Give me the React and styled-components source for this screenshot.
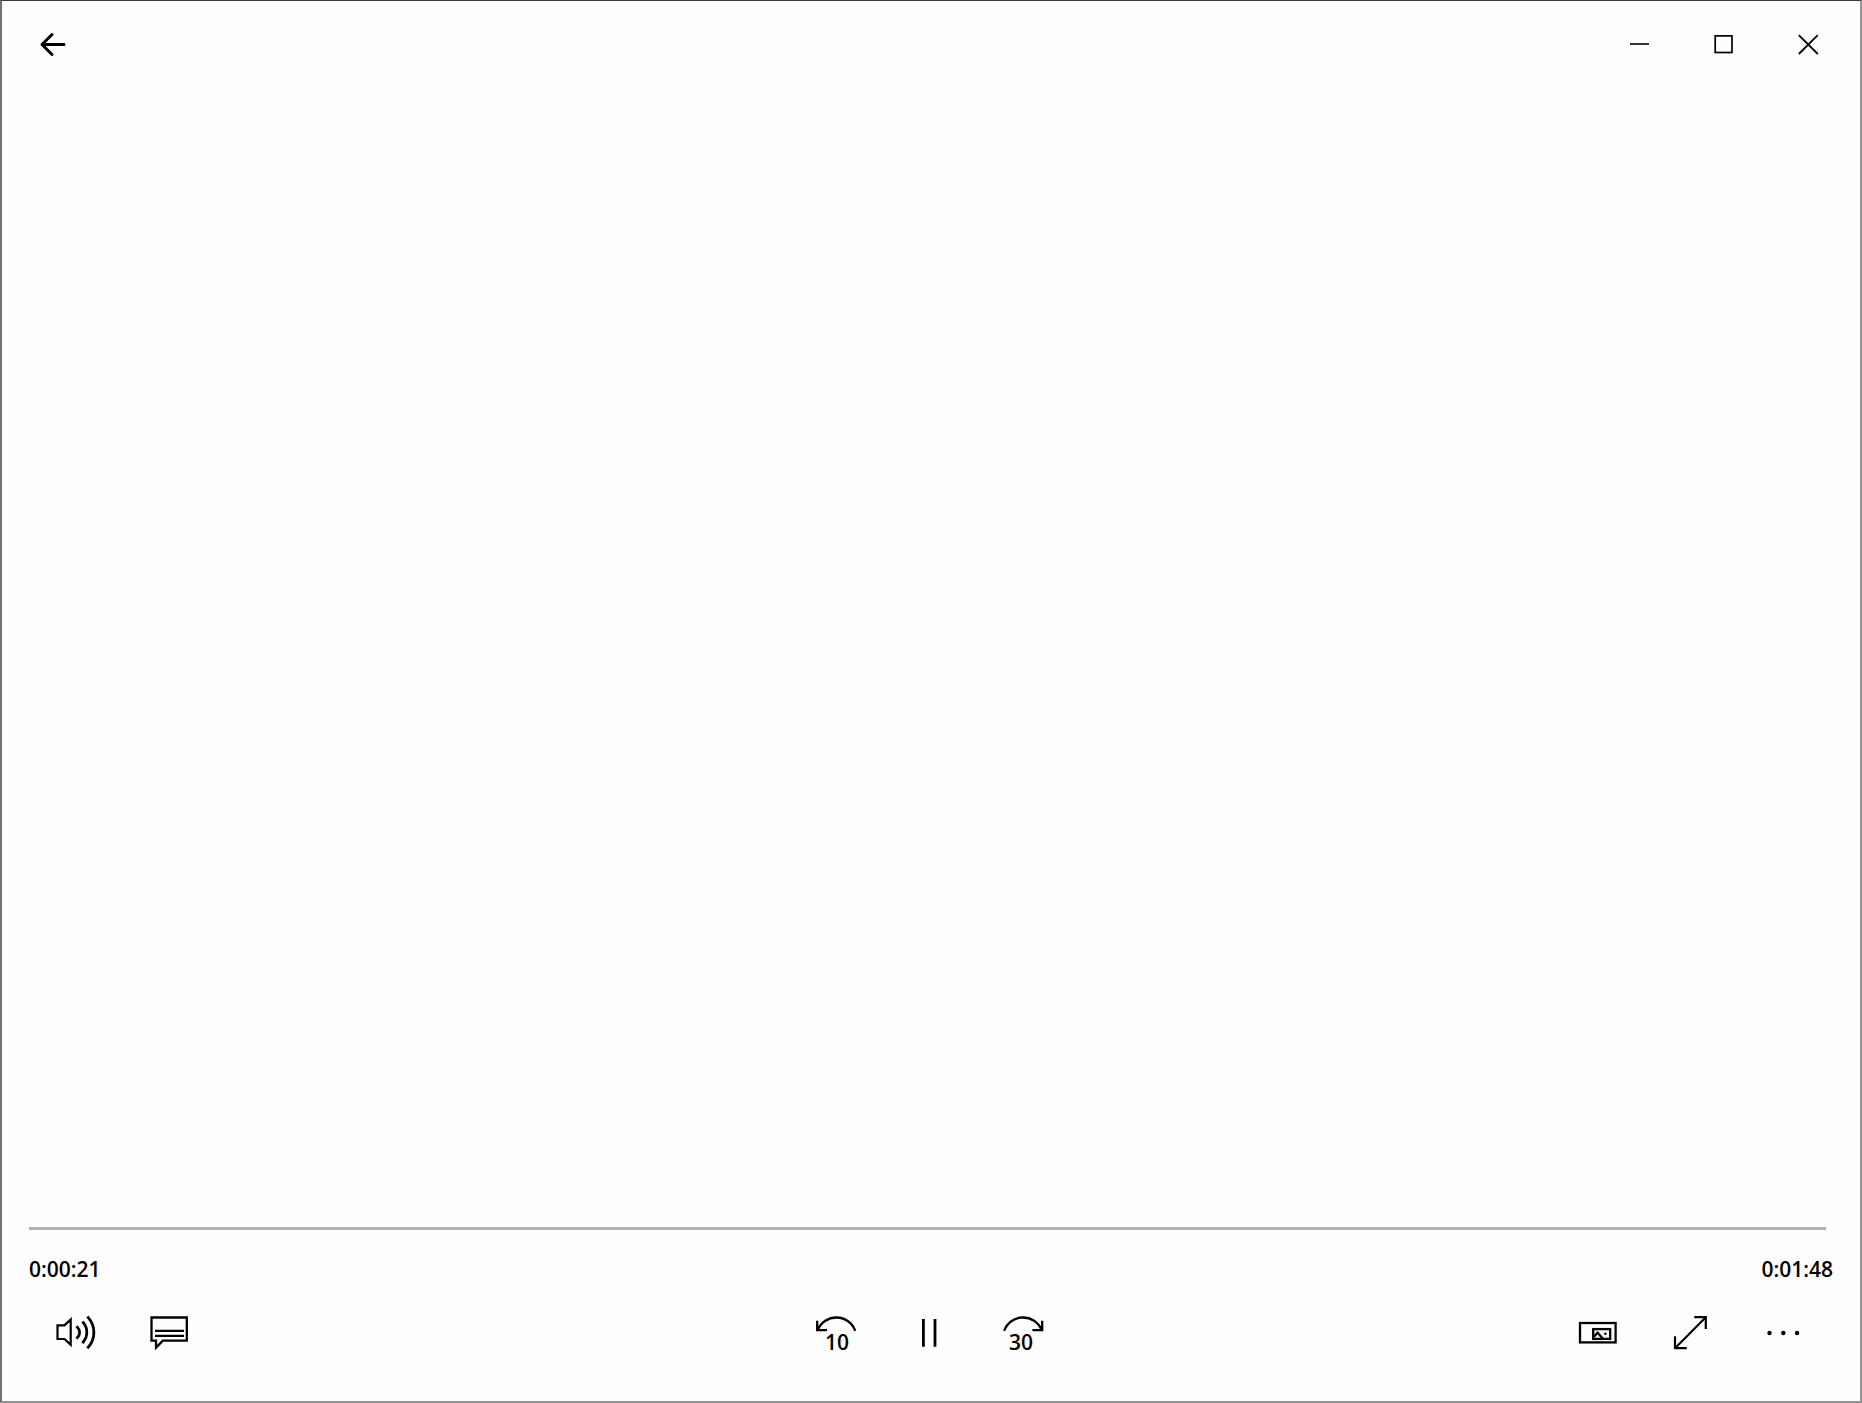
import React, { useState } from "react";
import styled, { createGlobalStyle } from "styled-components";

const GlobalStyle = createGlobalStyle`
    * {
        box-sizing: border-box;
    }

    body {
        margin: 0;
        background: #ffffff;
    }
`;

const Window = styled.div`
    min-height: 100vh;
    display: flex;
    flex-direction: column;
    background: #fefefe;
    color: #000000;
    border-style: solid;
    border-width: 1px 2px 2px;
    border-color: #3c3c3c #949494 #949494 #737373;
    font-family: "Open Sans", "Noto Sans", sans-serif;
`;

const TitleBar = styled.header`
    height: 87px;
    padding: 0 9px;
    display: flex;
    align-items: center;
    justify-content: space-between;
`;

const ButtonGroup = styled.div`
    display: flex;
    justify-content: ${(props) => props.$align || "flex-start"};
`;

const IconButton = styled.button`
    width: ${(props) => props.$width}px;
    height: 79px;
    padding: 0;
    display: flex;
    align-items: center;
    justify-content: center;
    background: transparent;
    border: none;
    color: inherit;
    font-family: inherit;
    cursor: pointer;
`;

const Icon = styled.svg`
    display: block;
    width: 49px;
    height: 49px;
    fill: none;
    stroke: currentColor;
    stroke-width: ${(props) => props.$stroke || 2};

    text {
        fill: currentColor;
        stroke: none;
        font-size: 21px;
        font-weight: 600;
        text-anchor: middle;
    }
`;

const Stage = styled.main`
    flex: 1;
`;

const Controls = styled.footer`
    padding: 0 27px 29px;
    display: flex;
    flex-direction: column;
`;

const SeekBar = styled.input`
    appearance: none;
    height: 3px;
    margin: 0 7px 0 0;
    background: #b0b0b0;
    cursor: pointer;

    &::-webkit-slider-thumb {
        appearance: none;
        width: 1px;
        height: 3px;
        background: #b0b0b0;
    }
`;

const Times = styled.div`
    margin: 25px 0 10px;
    display: flex;
    justify-content: space-between;
    font-size: 21px;
    font-weight: 600;
    line-height: 28px;
`;

const ControlRow = styled.div`
    margin-right: 3px;
    display: grid;
    grid-template-columns: 1fr auto 1fr;
`;

const BackIcon = () => (
    <Icon viewBox="0 0 49 49" $stroke={3} strokeLinecap="round" strokeLinejoin="round">
        <path d="M35 24.5H13M23 14.5L13 24.5L23 34.5" />
    </Icon>
);

const MinimizeIcon = () => (
    <Icon viewBox="0 0 49 49">
        <path d="M16 24H35" stroke="#333333" />
    </Icon>
);

const MaximizeIcon = () => (
    <Icon viewBox="0 0 49 49" $stroke={1.7}>
        <rect x="16.2" y="15.9" width="16.8" height="16.6" />
    </Icon>
);

const CloseIcon = () => (
    <Icon viewBox="0 0 49 49" $stroke={1.8}>
        <path d="M14.8 15.2L33.8 34M33.8 15.2L14.8 34" />
    </Icon>
);

const VolumeIcon = () => (
    <Icon viewBox="0 0 49 49" $stroke={2.2}>
        <path d="M6.5 17.3H13.5L19.7 11.5V36.8L13.5 31H6.5Z" />
        <path
            d="M26.4 19.3A7 7 0 0 1 26.4 29.5M32.3 14.7A15 15 0 0 1 32.3 34M37.3 9.6A22.5 22.5 0 0 1 37.3 39.2"
            strokeWidth="2.8"
            strokeLinecap="square"
        />
    </Icon>
);

const SubtitlesIcon = () => (
    <Icon viewBox="0 0 49 49" $stroke={2.3}>
        <path d="M7.5 9.5H42.8V32.6H18.8L12 39.6V32.6H7.5Z" />
        <path d="M11 22.8H40M11 27.8H40" />
    </Icon>
);

const SkipBackIcon = () => (
    <Icon viewBox="0 0 49 49" $stroke={2.3}>
        <path d="M5.2 12.7V22.1H15M5.8 22A20 20 0 0 1 43.2 22.8" />
        <text x="25" y="42">10</text>
    </Icon>
);

const SkipForwardIcon = () => (
    <Icon viewBox="0 0 49 49" $stroke={2.3}>
        <path d="M44.2 12.7V22.1H34.4M43.6 22A20 20 0 0 0 6.2 22.8" />
        <text x="23" y="42">30</text>
    </Icon>
);

const PauseIcon = () => (
    <Icon viewBox="0 0 49 49" $stroke={2.8}>
        <path d="M18.4 11V38.7M30 11V38.7" />
    </Icon>
);

const PlayIcon = () => (
    <Icon viewBox="0 0 49 49">
        <path d="M15 10L38 24.5L15 39Z" />
    </Icon>
);

const MiniViewIcon = () => (
    <Icon viewBox="0 0 49 49" $stroke={2.3}>
        <rect x="7" y="15" width="35.6" height="19.4" />
        <rect x="20.2" y="21.1" width="17" height="9.8" />
        <path d="M21 28.6L24.6 24.8L30 30.8" />
        <circle cx="32.4" cy="25.7" r="1.3" fill="currentColor" stroke="none" />
    </Icon>
);

const FullScreenIcon = () => (
    <Icon viewBox="0 0 49 49" $stroke={2.2}>
        <path d="M28.3 9.2H39.8V21M39.8 9.2L9 40.2M9 28.3V40.2H20.7" />
    </Icon>
);

const MoreIcon = () => (
    <Icon viewBox="0 0 49 49">
        <g fill="currentColor" stroke="none">
            <circle cx="10.5" cy="25" r="2.2" />
            <circle cx="24.3" cy="25" r="2.2" />
            <circle cx="38.1" cy="25" r="2.2" />
        </g>
    </Icon>
);

const DURATION = 108;

const formatTime = (total) => {
    const hours = Math.floor(total / 3600);
    const minutes = String(Math.floor((total % 3600) / 60)).padStart(2, "0");
    const seconds = String(total % 60).padStart(2, "0");
    return `${hours}:${minutes}:${seconds}`;
};

const App = () => {
    const [position, setPosition] = useState(21);
    const [playing, setPlaying] = useState(true);

    const seekTo = (value) => {
        setPosition(Math.min(DURATION, Math.max(0, value)));
    };

    return (
        <>
            <GlobalStyle />
            <Window>
                <TitleBar>
                    <IconButton $width={85} aria-label="Back">
                        <BackIcon />
                    </IconButton>
                    <ButtonGroup>
                        <IconButton $width={85} aria-label="Minimize">
                            <MinimizeIcon />
                        </IconButton>
                        <IconButton $width={85} aria-label="Maximize">
                            <MaximizeIcon />
                        </IconButton>
                        <IconButton $width={85} aria-label="Close">
                            <CloseIcon />
                        </IconButton>
                    </ButtonGroup>
                </TitleBar>

                <Stage />

                <Controls>
                    <SeekBar
                        type="range"
                        aria-label="Seek"
                        min="0"
                        max={DURATION}
                        value={position}
                        onChange={(e) => seekTo(Number(e.target.value))}
                    />
                    <Times>
                        <span>{formatTime(position)}</span>
                        <span>{formatTime(DURATION)}</span>
                    </Times>
                    <ControlRow>
                        <ButtonGroup>
                            <IconButton $width={93} aria-label="Volume">
                                <VolumeIcon />
                            </IconButton>
                            <IconButton $width={93} aria-label="Subtitles">
                                <SubtitlesIcon />
                            </IconButton>
                        </ButtonGroup>
                        <ButtonGroup>
                            <IconButton
                                $width={93}
                                aria-label="Skip back 10 seconds"
                                onClick={() => seekTo(position - 10)}
                            >
                                <SkipBackIcon />
                            </IconButton>
                            <IconButton
                                $width={93}
                                aria-label={playing ? "Pause" : "Play"}
                                onClick={() => setPlaying((prev) => !prev)}
                            >
                                {playing ? <PauseIcon /> : <PlayIcon />}
                            </IconButton>
                            <IconButton
                                $width={93}
                                aria-label="Skip forward 30 seconds"
                                onClick={() => seekTo(position + 30)}
                            >
                                <SkipForwardIcon />
                            </IconButton>
                        </ButtonGroup>
                        <ButtonGroup $align="flex-end">
                            <IconButton $width={93} aria-label="Play in mini view">
                                <MiniViewIcon />
                            </IconButton>
                            <IconButton $width={93} aria-label="Full screen">
                                <FullScreenIcon />
                            </IconButton>
                            <IconButton $width={93} aria-label="More">
                                <MoreIcon />
                            </IconButton>
                        </ButtonGroup>
                    </ControlRow>
                </Controls>
            </Window>
        </>
    );
};

export default App;
